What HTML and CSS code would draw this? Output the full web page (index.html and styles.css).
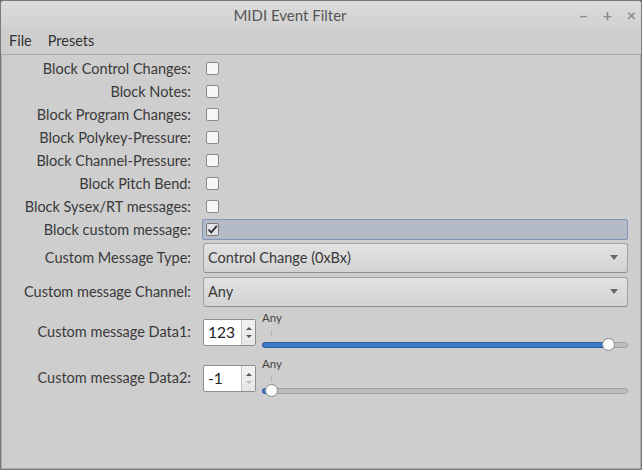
FILE: index.html
```html
<!DOCTYPE html>
<html>
<head>
<meta charset="utf-8">
<link rel="stylesheet" href="styles.css">
</head>
<body>
<div class="window">
  <div class="titlebar">
    <div class="title">MIDI Event Filter</div>
    <div class="controls">
      <span class="ctl">&#8211;</span>
      <span class="ctl plus">+</span>
      <span class="ctl">&#215;</span>
    </div>
  </div>
  <div class="menubar">
    <span class="menu">File</span>
    <span class="menu">Presets</span>
  </div>
  <div class="content">
    <div class="form">
      <div class="label">Block Control Changes:</div><div class="field"><span class="check"></span></div>
      <div class="label">Block Notes:</div><div class="field"><span class="check"></span></div>
      <div class="label">Block Program Changes:</div><div class="field"><span class="check"></span></div>
      <div class="label">Block Polykey-Pressure:</div><div class="field"><span class="check"></span></div>
      <div class="label">Block Channel-Pressure:</div><div class="field"><span class="check"></span></div>
      <div class="label">Block Pitch Bend:</div><div class="field"><span class="check"></span></div>
      <div class="label">Block Sysex/RT messages:</div><div class="field"><span class="check"></span></div>
      <div class="label">Block custom message:</div>
      <div class="field"><div class="focusbox"><span class="check checked"><svg width="11" height="11" viewBox="0 0 11 11"><path d="M1.5 5.5 L4.2 8.5 L9.8 1.8" fill="none" stroke="#2a2a2a" stroke-width="1.8"/></svg></span></div></div>
      <div class="label">Custom Message Type:</div>
      <div class="field"><div class="combo"><span>Control Change (0xBx)</span><span class="arrow"></span></div></div>
      <div class="label">Custom message Channel:</div>
      <div class="field"><div class="combo"><span>Any</span><span class="arrow"></span></div></div>
      <div class="label">Custom message Data1:</div>
      <div class="field">
        <div class="datarow">
          <div class="spin"><span class="val">123</span><span class="btns"><span class="up"></span><span class="down"></span></span></div>
          <div class="slider">
            <div class="any">Any</div>
            <div class="tick"></div>
            <div class="track"><div class="fill" style="width:345px"></div><div class="handle" style="left:339px"></div></div>
          </div>
        </div>
      </div>
      <div class="label">Custom message Data2:</div>
      <div class="field">
        <div class="datarow">
          <div class="spin"><span class="val">-1</span><span class="btns"><span class="up"></span><span class="down dis"></span></span></div>
          <div class="slider">
            <div class="any">Any</div>
            <div class="tick"></div>
            <div class="track"><div class="fill" style="width:6px"></div><div class="handle" style="left:2px"></div></div>
          </div>
        </div>
      </div>
    </div>
  </div>
</div>
</body>
</html>
```

FILE: styles.css
```css
html, body {
  margin: 0;
  padding: 0;
  background: #6a6a6a;
}
body {
  font-family: Lato, "Noto Sans", sans-serif;
  font-size: 14.5px;
  color: #3a3a3a;
}
.window {
  width: 640px;
  height: 468px;
  border: 1px solid #7a7a7a;
  border-radius: 4px 4px 0 0;
  background: #cecece;
  display: flex;
  flex-direction: column;
  overflow: hidden;
}
.titlebar {
  height: 29px;
  background: linear-gradient(#dcdcdc, #d0d0d0);
  position: relative;
  display: flex;
  align-items: center;
  justify-content: center;
  padding-right: 62px;
  padding-bottom: 2px;
  box-sizing: border-box;
}
.title {
  font-size: 15px;
  color: #555;
}
.controls {
  position: absolute;
  right: 3px;
  top: 4px;
  display: flex;
  gap: 11px;
}
.ctl {
  color: #8a8a8a;
  font-size: 16px;
  font-weight: bold;
  width: 13px;
  text-align: center;
}
.menubar {
  height: 25px;
  display: flex;
  align-items: center;
  padding-left: 8px;
  padding-bottom: 3px;
  box-sizing: border-box;
  gap: 16px;
  border-bottom: 1px solid #a8a8a8;
}
.menu {
  color: #333;
  font-size: 14.5px;
}
.content {
  flex: 1;
  border-left: 1px solid #a8a8a8;
  border-right: 1px solid #a8a8a8;
  border-bottom: 1px solid #a8a8a8;
}
.form {
  display: grid;
  grid-template-columns: 189px 1fr;
  grid-template-rows: repeat(8, 23px) 33px 35px 45px 47px;
  column-gap: 12px;
  padding: 2px 12px 0 0;
}
.label {
  text-align: right;
  align-self: center;
  white-space: nowrap;
}
.field {
  display: flex;
  align-items: center;
}
.check {
  width: 11px;
  height: 11px;
  border: 1px solid #8a8a8a;
  border-radius: 2px;
  background: #f6f6f6;
  margin-left: 3px;
  display: flex;
  align-items: center;
  justify-content: center;
}
.check.checked {
  background: #e2e3e6;
  border-color: #7a7a7a;
}
.focusbox {
  flex: 1;
  height: 19px;
  margin-left: -1px;
  border: 1px solid #7d95bd;
  border-radius: 2px;
  background: #b5bbc6;
  display: flex;
  align-items: center;
  padding-left: 3px;
}
.focusbox .check { margin-left: 0; }
.combo {
  flex: 1;
  height: 28px;
  border: 1px solid #a2a2a2;
  border-bottom-color: #8e8e8e;
  border-radius: 3px;
  background: linear-gradient(#e2e2e2, #d3d3d3);
  display: flex;
  align-items: center;
  justify-content: space-between;
  padding: 0 9px 0 4px;
  color: #383838;
}
.arrow {
  width: 0;
  height: 0;
  border-left: 4px solid transparent;
  border-right: 4px solid transparent;
  border-top: 5px solid #666;
}
.datarow {
  flex: 1;
  display: flex;
  align-items: flex-start;
  gap: 6px;
}
.spin {
  width: 51px;
  height: 25px;
  border: 1px solid #8e8e8e;
  border-radius: 2px;
  background: #fff;
  display: flex;
  margin-top: 4px;
}
.val {
  flex: 1;
  padding-left: 4px;
  line-height: 25px;
  font-size: 15.5px;
  color: #222;
}
.btns {
  width: 13px;
  border-left: 1px solid #c4c4c4;
  background: linear-gradient(#f2f2f2, #e6e6e6);
  display: flex;
  flex-direction: column;
  align-items: center;
  justify-content: center;
  gap: 5px;
}
.up {
  width: 0; height: 0;
  border-left: 3px solid transparent;
  border-right: 3px solid transparent;
  border-bottom: 3px solid #555;
}
.down {
  width: 0; height: 0;
  border-left: 3px solid transparent;
  border-right: 3px solid transparent;
  border-top: 3px solid #555;
}
.down.dis { border-top-color: #b8b8b8; }
.slider {
  flex: 1;
  display: flex;
  flex-direction: column;
}
.any {
  font-size: 11.5px;
  color: #444;
  line-height: 12px;
  margin-top: -3px;
}
.tick {
  width: 1px;
  height: 6px;
  background: #b0b0b0;
  margin: 6px 0 0 9px;
}
.track {
  position: relative;
  height: 4px;
  margin-top: 6px;
  border: 1px solid #a0a0a0;
  border-radius: 3px;
  background: #bdbdbd;
}
.fill {
  position: absolute;
  left: -1px;
  top: -1px;
  height: 4px;
  border: 1px solid #2c5c9c;
  border-radius: 3px;
  background: #3c7bcb;
}
.handle {
  position: absolute;
  top: -5px;
  width: 11px;
  height: 11px;
  border: 1px solid #8a8a8a;
  border-radius: 50%;
  background: #fbfbfb;
}
```
